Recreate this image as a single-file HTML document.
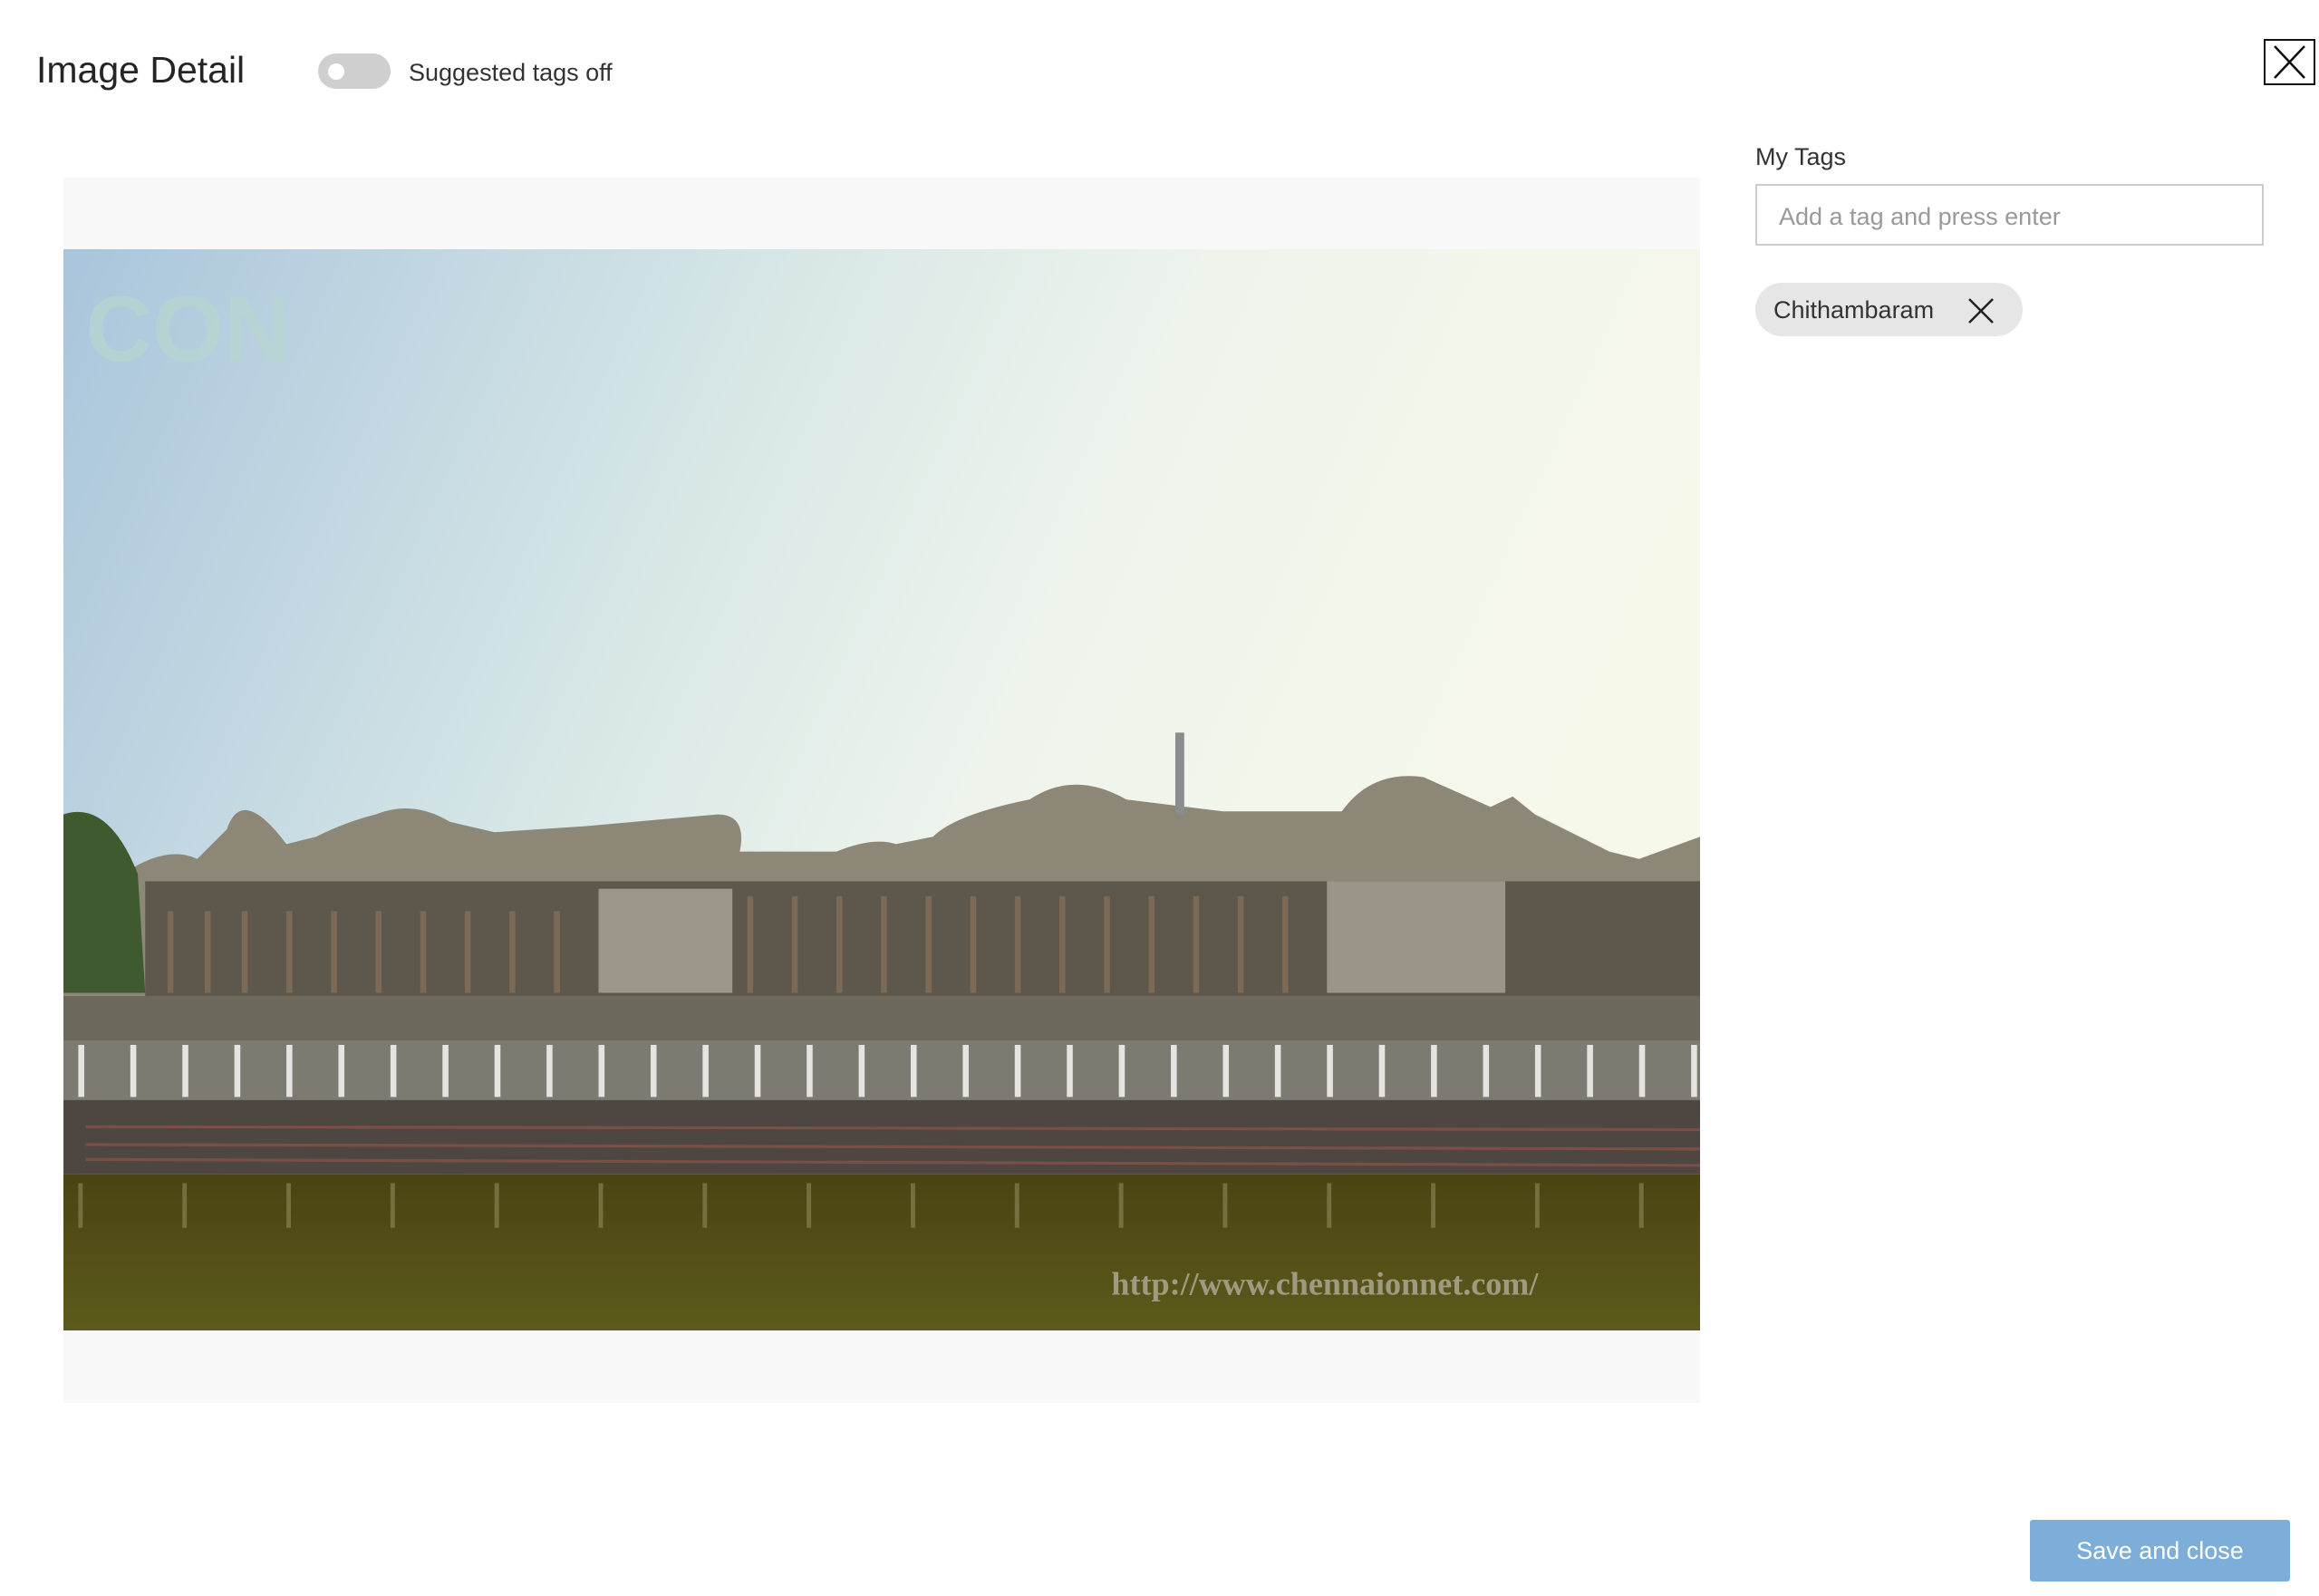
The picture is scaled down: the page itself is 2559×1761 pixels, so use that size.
<!DOCTYPE html>
<html><head><meta charset="utf-8"><style>
html,body{margin:0;padding:0;background:#fff;}
body{width:2559px;height:1761px;position:relative;overflow:hidden;font-family:"Liberation Sans",sans-serif;color:#222;}
.abs{position:absolute;}
</style></head><body>
<div class="abs" style="left:40px;top:50px;font-size:41px;line-height:54px;color:#252525;">Image Detail</div>
<div class="abs" style="left:351px;top:59px;width:80px;height:39px;border-radius:20px;background:#cfcfcf;"></div>
<div class="abs" style="left:362px;top:70px;width:18px;height:18px;border-radius:9px;background:#fff;"></div>
<div class="abs" style="left:451px;top:62px;font-size:27px;line-height:36px;color:#333;">Suggested tags off</div>
<div class="abs" style="left:2498px;top:43px;width:53px;height:47px;border:2px solid #111;box-sizing:content-box;"></div>
<svg class="abs" style="left:2498px;top:43px" width="57" height="51" viewBox="0 0 57 51"><path d="M12 8 L45 43 M45 8 L12 43" stroke="#111" stroke-width="2.5"/></svg>
<div class="abs" style="left:1937px;top:155px;font-size:27px;line-height:36px;color:#333;">My Tags</div>
<div class="abs" style="left:1937px;top:203px;width:561px;height:68px;border:2px solid #ccc;box-sizing:border-box;"></div>
<div class="abs" style="left:1963px;top:221px;font-size:27px;line-height:36px;color:#999;">Add a tag and press enter</div>
<div class="abs" style="left:1937px;top:312px;width:295px;height:59px;border-radius:30px;background:#e6e6e6;"></div>
<div class="abs" style="left:1957px;top:324px;font-size:27px;line-height:36px;color:#333;">Chithambaram</div>
<svg class="abs" style="left:2170px;top:328px" width="32" height="30"><path d="M3 2 L29 28 M29 2 L3 28" stroke="#222" stroke-width="2.5"/></svg>
<div class="abs" style="left:70px;top:195px;width:1806px;height:1353px;background:#f8f8f8;"></div>
<svg class="abs" style="left:70px;top:275px" width="1806" height="1193" viewBox="0 0 1101 727" preserveAspectRatio="none">
<defs>
<linearGradient id="sky" x1="0" y1="0" x2="1" y2="0.3"><stop offset="0" stop-color="#a9c5dc"/><stop offset="0.4" stop-color="#d6e6e6"/><stop offset="0.65" stop-color="#eef4ec"/><stop offset="1" stop-color="#f6f8ea"/></linearGradient>
<linearGradient id="water" x1="0" y1="0" x2="0" y2="1"><stop offset="0" stop-color="#4a4412"/><stop offset="1" stop-color="#5c5a1c"/></linearGradient>
</defs>
<rect width="1101" height="727" fill="url(#sky)"/>
<text x="15" y="75" font-size="62" font-weight="bold" fill="#b8d6cf" opacity="0.7" font-family="Liberation Sans">CON</text>
<path d="M40 420 Q70 400 90 410 L110 390 Q120 360 150 400 L170 395 Q190 385 210 380 Q235 370 260 385 L290 392 L350 388 L440 380 Q460 380 455 405 L520 405 Q545 395 560 400 L585 395 Q600 380 650 370 Q680 350 715 370 L780 378 L860 378 Q880 350 915 355 L960 375 L975 368 L990 380 L1040 405 L1060 410 L1101 395 L1101 502 L0 502 L0 430 Z" fill="#8d8778"/>
<rect x="748" y="325" width="6" height="55" fill="#8a8d90"/>
<rect x="55" y="425" width="1046" height="80" fill="#5e574b"/>
<g fill="#7b6a55">
<rect x="70" y="445" width="4" height="55"/><rect x="95" y="445" width="4" height="55"/><rect x="120" y="445" width="4" height="55"/><rect x="150" y="445" width="4" height="55"/><rect x="180" y="445" width="4" height="55"/><rect x="210" y="445" width="4" height="55"/><rect x="240" y="445" width="4" height="55"/><rect x="270" y="445" width="4" height="55"/><rect x="300" y="445" width="4" height="55"/><rect x="330" y="445" width="4" height="55"/><rect x="460" y="435" width="4" height="65"/><rect x="490" y="435" width="4" height="65"/><rect x="520" y="435" width="4" height="65"/><rect x="550" y="435" width="4" height="65"/><rect x="580" y="435" width="4" height="65"/><rect x="610" y="435" width="4" height="65"/><rect x="640" y="435" width="4" height="65"/><rect x="670" y="435" width="4" height="65"/><rect x="700" y="435" width="4" height="65"/><rect x="730" y="435" width="4" height="65"/><rect x="760" y="435" width="4" height="65"/><rect x="790" y="435" width="4" height="65"/><rect x="820" y="435" width="4" height="65"/>
</g>
<rect x="360" y="430" width="90" height="70" fill="#9b958a"/>
<rect x="850" y="425" width="120" height="75" fill="#9a9588"/>
<path d="M0 380 Q30 370 50 420 L55 500 L0 500 Z" fill="#3f5a2e"/>
<rect x="0" y="502" width="1101" height="30" fill="#6c685c"/>
<rect x="0" y="532" width="1101" height="40" fill="#7d7a72"/>
<g fill="#e6e4e0">
<rect x="10" y="535" width="4" height="35"/><rect x="45" y="535" width="4" height="35"/><rect x="80" y="535" width="4" height="35"/><rect x="115" y="535" width="4" height="35"/><rect x="150" y="535" width="4" height="35"/><rect x="185" y="535" width="4" height="35"/><rect x="220" y="535" width="4" height="35"/><rect x="255" y="535" width="4" height="35"/><rect x="290" y="535" width="4" height="35"/><rect x="325" y="535" width="4" height="35"/><rect x="360" y="535" width="4" height="35"/><rect x="395" y="535" width="4" height="35"/><rect x="430" y="535" width="4" height="35"/><rect x="465" y="535" width="4" height="35"/><rect x="500" y="535" width="4" height="35"/><rect x="535" y="535" width="4" height="35"/><rect x="570" y="535" width="4" height="35"/><rect x="605" y="535" width="4" height="35"/><rect x="640" y="535" width="4" height="35"/><rect x="675" y="535" width="4" height="35"/><rect x="710" y="535" width="4" height="35"/><rect x="745" y="535" width="4" height="35"/><rect x="780" y="535" width="4" height="35"/><rect x="815" y="535" width="4" height="35"/><rect x="850" y="535" width="4" height="35"/><rect x="885" y="535" width="4" height="35"/><rect x="920" y="535" width="4" height="35"/><rect x="955" y="535" width="4" height="35"/><rect x="990" y="535" width="4" height="35"/><rect x="1025" y="535" width="4" height="35"/><rect x="1060" y="535" width="4" height="35"/><rect x="1095" y="535" width="4" height="35"/>
</g>
<rect x="0" y="572" width="1101" height="50" fill="#4e4640"/>
<g stroke="#7a4f44" stroke-width="2"><line x1="15" y1="590" x2="1101" y2="592"/><line x1="15" y1="602" x2="1101" y2="605"/><line x1="15" y1="612" x2="1101" y2="616"/></g>
<rect x="0" y="622" width="1101" height="105" fill="url(#water)"/>
<g fill="#8f8a5a" opacity="0.6">
<rect x="10" y="628" width="3" height="30"/><rect x="80" y="628" width="3" height="30"/><rect x="150" y="628" width="3" height="30"/><rect x="220" y="628" width="3" height="30"/><rect x="290" y="628" width="3" height="30"/><rect x="360" y="628" width="3" height="30"/><rect x="430" y="628" width="3" height="30"/><rect x="500" y="628" width="3" height="30"/><rect x="570" y="628" width="3" height="30"/><rect x="640" y="628" width="3" height="30"/><rect x="710" y="628" width="3" height="30"/><rect x="780" y="628" width="3" height="30"/><rect x="850" y="628" width="3" height="30"/><rect x="920" y="628" width="3" height="30"/><rect x="990" y="628" width="3" height="30"/><rect x="1060" y="628" width="3" height="30"/>
</g>
<text x="705" y="703" font-size="22" font-weight="bold" fill="#a09a80" font-family="Liberation Serif">http://www.chennaionnet.com/</text>
</svg>
<div class="abs" style="left:2240px;top:1677px;width:287px;height:68px;border-radius:3px;background:#7daed9;color:#fff;font-size:27px;line-height:68px;text-align:center;">Save and close</div>
</body></html>
